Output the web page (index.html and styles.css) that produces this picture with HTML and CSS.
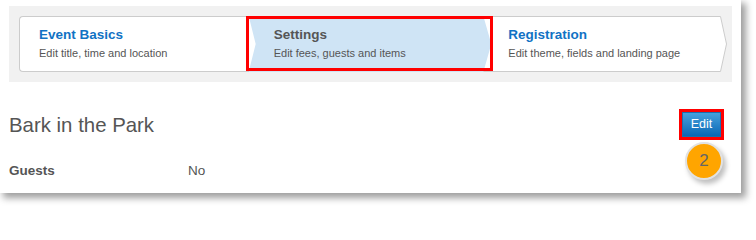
FILE: index.html
```html
<!DOCTYPE html>
<html>
<head>
<meta charset="utf-8">
<link rel="stylesheet" href="styles.css">
</head>
<body>
<div class="panel">
  <div class="steps-bar">
    <div class="wizard">
      <div class="step step-first">
        <div class="step-title">Event Basics</div>
        <div class="step-sub">Edit title, time and location</div>
      </div>
      <div class="step step-active">
        <div class="step-title">Settings</div>
        <div class="step-sub">Edit fees, guests and items</div>
      </div>
      <div class="step step-last">
        <div class="step-title">Registration</div>
        <div class="step-sub">Edit theme, fields and landing page</div>
      </div>
      <svg class="cap" width="7" height="56" viewBox="0 0 7 56"><path d="M0 0.5 H0.5 L6.5 28 L0.5 55.5 H0 Z" fill="#fff" stroke="none"/><path d="M0 0.5 H0.5 L6.5 28 L0.5 55.5 H0" fill="none" stroke="#cccccc" stroke-width="1"/></svg>
    </div>
  </div>
  <div class="header-row">
    <h1 class="event-title">Bark in the Park</h1>
    <span class="highlight"><button class="edit-btn">Edit</button></span>
  </div>
  <div class="field-row">
    <div class="field-label">Guests</div>
    <div class="field-value">No</div>
  </div>
  <div class="badge">2</div>
</div>
</body>
</html>
```
FILE: styles.css
```css
html, body {
  margin: 0;
  padding: 0;
  background: #ffffff;
}
body {
  font-family: "Liberation Sans", Arial, sans-serif;
  color: #555555;
  height: 209px;
}
.panel {
  position: relative;
  box-sizing: border-box;
  width: 741px;
  height: 193px;
  padding: 6px 9px 0 9px;
  background: #ffffff;
  box-shadow: 4px 4px 7px 1px rgba(0, 0, 0, 0.38);
}
.steps-bar {
  background: #f1f1f1;
  padding: 10px 5px 10px 10px;
}
.wizard {
  display: flex;
  height: 56px;
}
.step {
  box-sizing: border-box;
  height: 56px;
  border-top: 1px solid #cccccc;
  border-bottom: 1px solid #cccccc;
  background: #ffffff;
  padding-top: 10px;
}
.step-first {
  width: 229px;
  border-left: 1px solid #cccccc;
  border-radius: 4px 0 0 4px;
  padding-left: 19px;
}
.step-active {
  position: relative;
  width: 244px;
  padding-left: 26px;
}
.step-active::before {
  content: "";
  position: absolute;
  left: 1px;
  right: 0;
  top: -1px;
  bottom: -1px;
  background: #cfe4f5;
  clip-path: polygon(0 0, calc(100% - 8px) 0, 100% 50%, calc(100% - 8px) 100%, 0 100%, 7px 50%);
}
.step-active::after {
  content: "";
  position: absolute;
  left: -2px;
  right: -2px;
  top: -1px;
  bottom: 0;
  border: 3px solid #ff0000;
}
.step-active .step-title,
.step-active .step-sub {
  position: relative;
  z-index: 1;
}
.step-last {
  width: 229px;
  padding-left: 17px;
}
.cap {
  display: block;
  flex: none;
}
.step-title {
  font-size: 13.5px;
  line-height: 16px;
  font-weight: bold;
  color: #1172c4;
  white-space: nowrap;
}
.step-active .step-title {
  color: #555555;
}
.step-sub {
  margin-top: 3px;
  font-size: 11px;
  line-height: 14px;
  color: #555555;
  white-space: nowrap;
}
.header-row {
  display: flex;
  align-items: center;
  justify-content: space-between;
  margin-top: 30px;
  padding-right: 8px;
}
.event-title {
  margin: 0;
  font-size: 20.4px;
  line-height: 24px;
  font-weight: normal;
  color: #555555;
}
.highlight {
  display: block;
  margin: -3px 0;
  border: 3px solid #ff0000;
  line-height: 0;
}
.edit-btn {
  box-sizing: border-box;
  width: 39px;
  height: 25px;
  padding: 0;
  margin: 0;
  border: 1px solid #1b6fae;
  border-radius: 0;
  background: linear-gradient(#46a1dd, #0a67b5);
  color: #ffffff;
  font-family: "Liberation Sans", Arial, sans-serif;
  font-size: 12.5px;
  line-height: 23px;
  vertical-align: top;
}
.field-row {
  display: flex;
  margin-top: 26px;
}
.field-label {
  width: 179px;
  font-size: 13.5px;
  line-height: 16px;
  font-weight: bold;
  color: #555555;
}
.field-value {
  font-size: 13.5px;
  line-height: 16px;
  color: #555555;
}
.badge {
  position: absolute;
  left: 685px;
  top: 142px;
  box-sizing: border-box;
  width: 38px;
  height: 38px;
  border-radius: 50%;
  border: 2px solid #e2e2e2;
  background: #ffa500;
  box-shadow: 3px 4px 5px rgba(0, 0, 0, 0.25);
  display: flex;
  align-items: center;
  justify-content: center;
  font-size: 17px;
  color: #666666;
}
```
